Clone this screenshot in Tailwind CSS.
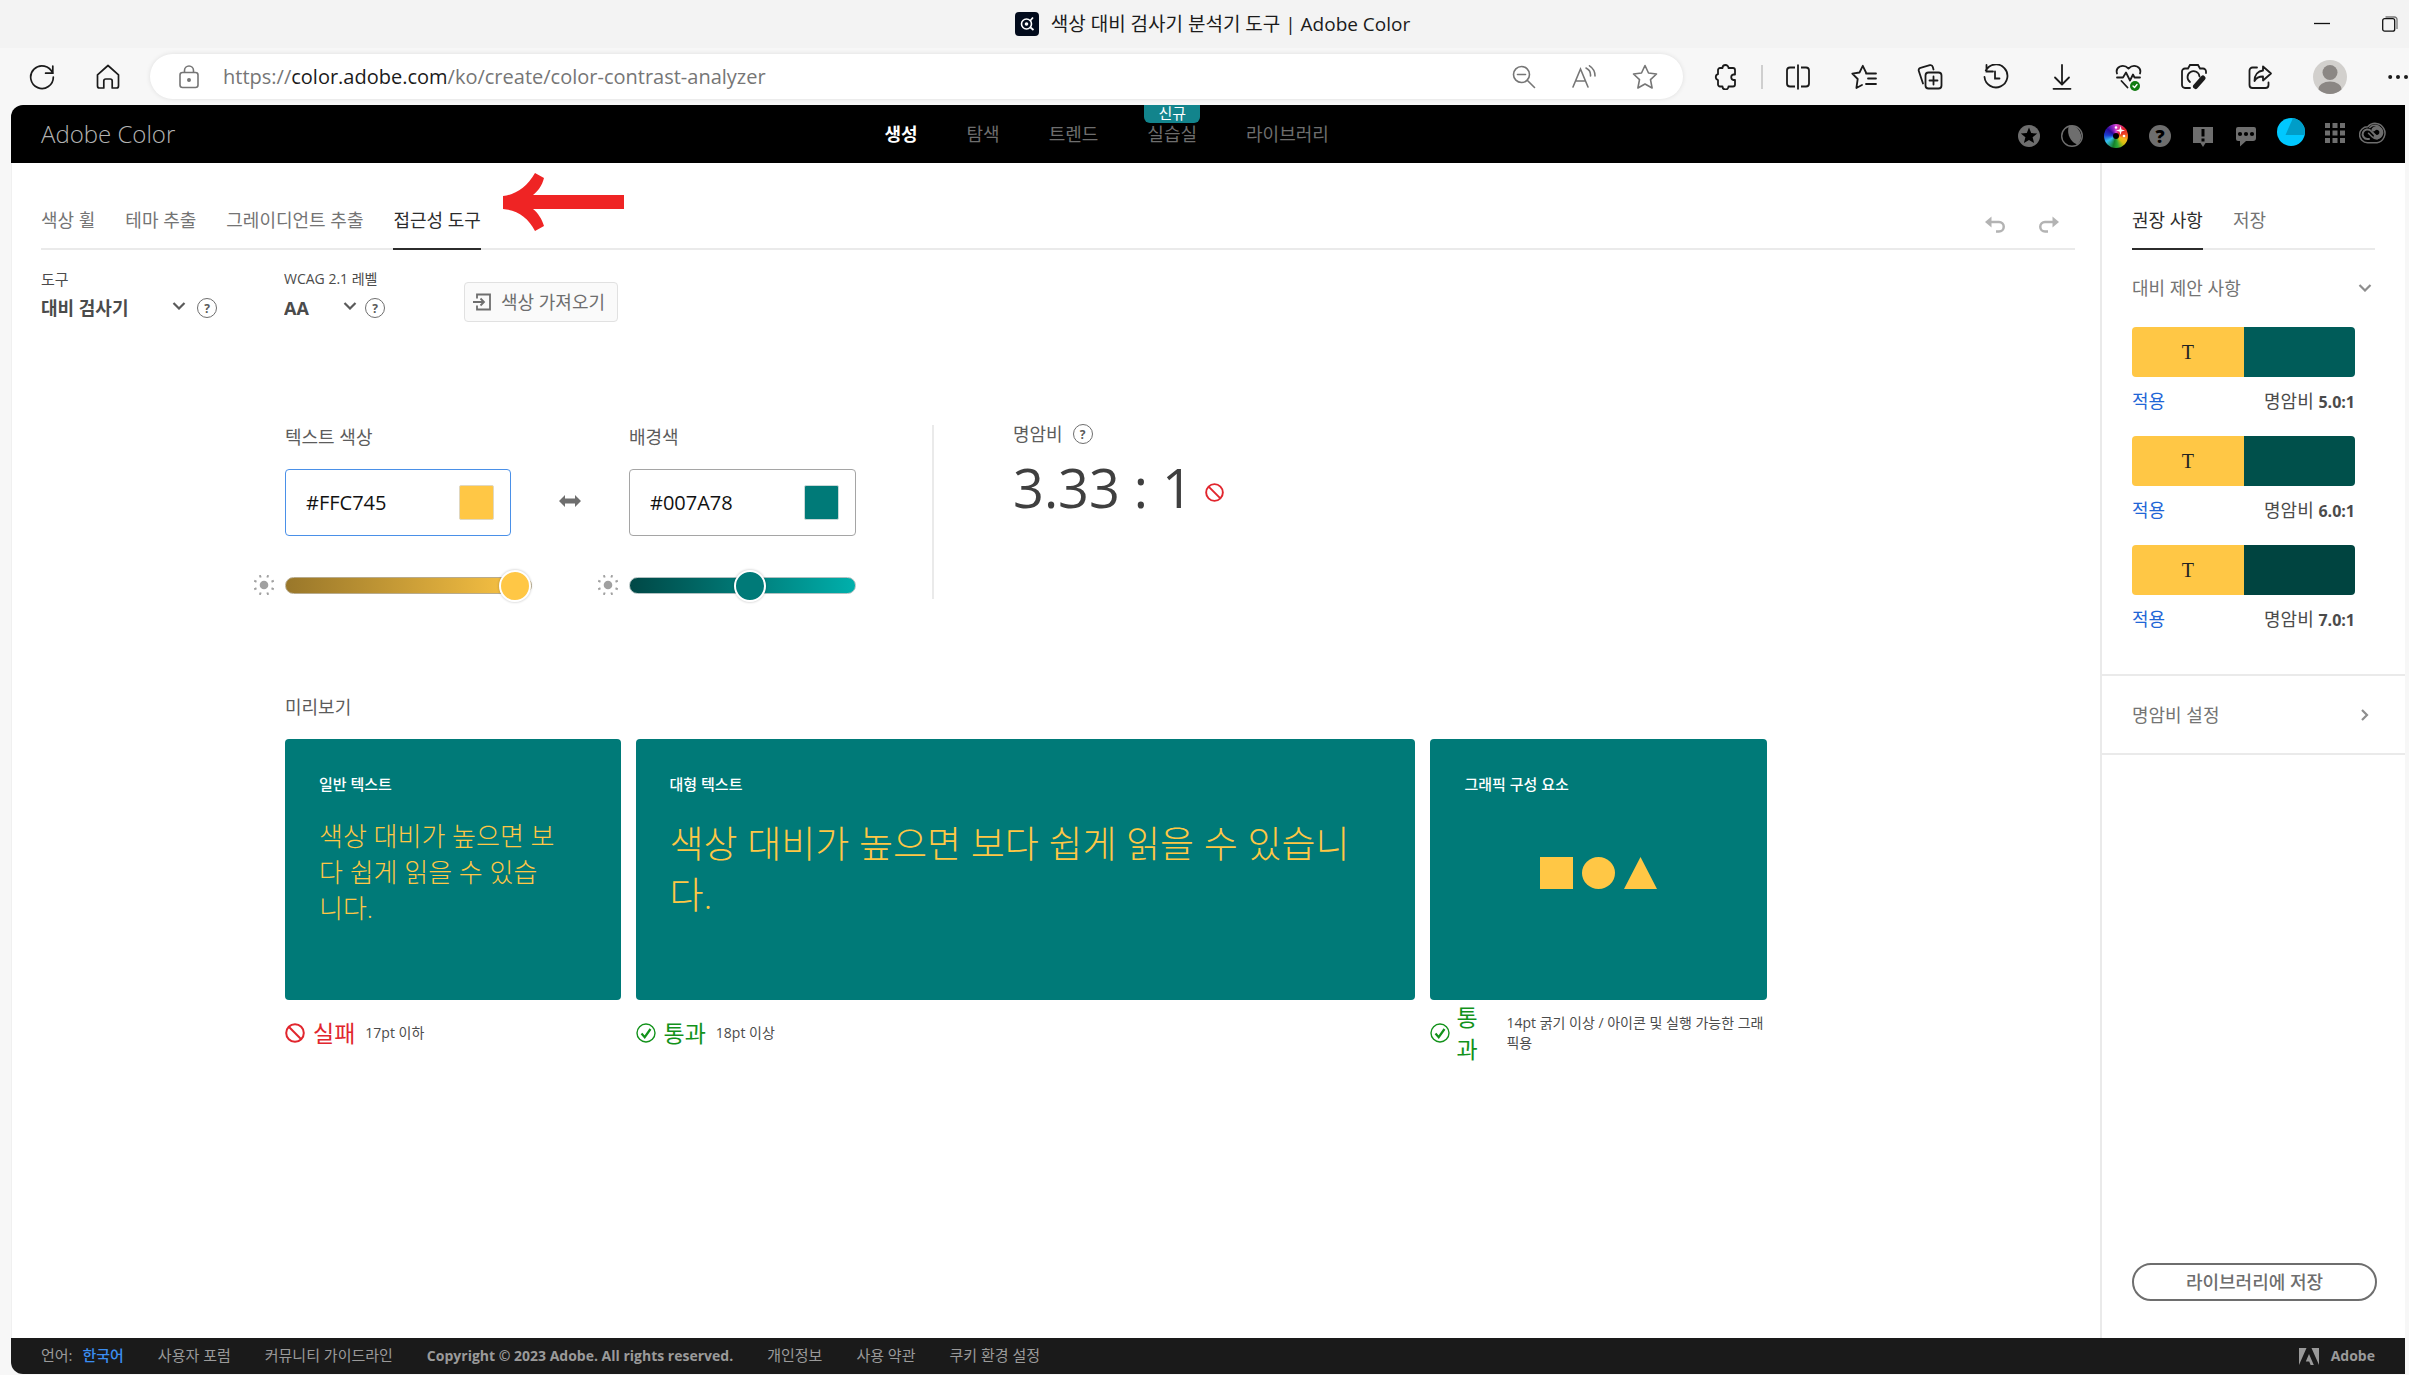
<!DOCTYPE html>
<html lang="ko">
<head>
<meta charset="utf-8">
<title>색상 대비 검사기 분석기 도구 | Adobe Color</title>
<script src="https://cdn.jsdelivr.net/npm/@tailwindcss/browser@4"></script>
</head>
<body class="flex min-h-screen flex-col bg-[#f7f7f7] pb-px font-['Open_Sans','Noto_Sans_CJK_KR',sans-serif] text-lg text-[#4b4b4b]">

<!-- Window title bar -->
<div class="grid h-12 grid-cols-[1fr_auto_1fr] items-center bg-[#f3f3f3] pl-4">
  <span></span>
  <div class="flex items-center gap-3">
    <svg class="size-6" viewBox="0 0 24 24" fill="none"><rect width="24" height="24" rx="4" fill="#020b1c"/><circle cx="11.500" cy="12" r="5" stroke="#fff" stroke-width="1.600"/><circle cx="11.500" cy="12" r="1.800" fill="#fff"/><path d="M15 9l3-3.500M15.500 15.500l3 2.500" stroke="#fff" stroke-width="1.800"/></svg>
    <span class="text-[19px] leading-6 text-[#1b1b1b]">색상 대비 검사기 분석기 도구 | Adobe Color</span>
  </div>
  <div class="flex items-center justify-end gap-[52px] pr-[11px]">
    <button aria-label="최소화"><svg class="size-4" viewBox="0 0 16 16"><path d="M0 7.500h16" stroke="#111" stroke-width="1.300"/></svg></button>
    <button aria-label="복원"><svg class="size-4" viewBox="0 0 16 16" fill="none" stroke="#111" stroke-width="1.300"><path d="M3.500 1h9A2.500 2.500 0 0 1 15 3.500V13" stroke="#777"/><rect x="0.700" y="2.700" width="12" height="12.500" rx="2"/></svg></button>
  </div>
</div>

<!-- Browser toolbar -->
<div class="flex h-[57px] items-center text-[#1b1b1b]">
  <div class="flex w-[150px] items-center gap-10 pl-[29px]">
    <button aria-label="새로 고침"><svg class="size-[26px]" viewBox="0 0 26 26" fill="none" stroke="currentColor" stroke-width="1.700" stroke-linecap="round"><path d="M23.500 9A11.300 11.300 0 1 0 24.300 13"/><path d="M23.800 2v7.200h-7.200"/></svg></button>
    <button aria-label="홈"><svg class="size-[26px]" viewBox="0 0 26 26" fill="none" stroke="currentColor" stroke-width="1.700" stroke-linejoin="round"><path d="M2.500 10.800L13 1.500l10.500 9.300V22a2 2 0 0 1-2 2h-4.300v-7a2 2 0 0 0-2-2h-4.400a2 2 0 0 0-2 2v7H4.500a2 2 0 0 1-2-2z"/></svg></button>
  </div>
  <div class="flex h-[45px] flex-1 items-center rounded-full bg-white pr-[25px] pl-[29px] text-[#767676] shadow-[0_0_5px_rgba(0,0,0,0.10)]">
    <svg class="h-6 w-5" viewBox="0 0 20 24" fill="none" stroke="currentColor" stroke-width="1.600"><rect x="1" y="7.500" width="18" height="15" rx="2.500"/><path d="M5.500 7.500V5.500a4.500 4.500 0 0 1 9 0v2"/><circle cx="10" cy="15" r="1.200" fill="currentColor"/></svg>
    <div class="flex-1 pl-6 text-xl leading-6">https://<span class="text-[#1b1b1b]">color.adobe.com</span>/ko/create/color-contrast-analyzer</div>
    <div class="flex items-center gap-9">
      <button aria-label="축소"><svg class="size-6" viewBox="0 0 24 24" fill="none" stroke="currentColor" stroke-width="1.600" stroke-linecap="round"><circle cx="9.500" cy="9.500" r="8"/><path d="M15.500 15.500l7 7M5.500 9.500h8"/></svg></button>
      <button aria-label="소리내어 읽기"><svg class="size-6" viewBox="0 0 24 24" fill="none" stroke="currentColor" stroke-width="1.600" stroke-linecap="round"><path d="M1 22L8.500 4 16 22M3.500 16h10M14 3a8 8 0 0 1 4.500 8M17.500 0.800A12 12 0 0 1 23 11"/></svg></button>
      <button aria-label="즐겨찾기에 추가"><svg class="size-[26px]" viewBox="0 0 26 26" fill="none" stroke="currentColor" stroke-width="1.600" stroke-linejoin="round"><path d="M13 1.500l3.500 7.500 8 1-6 5.700 1.600 8.300L13 20l-7.100 4 1.600-8.300-6-5.700 8-1z"/></svg></button>
    </div>
  </div>
  <div class="flex items-center pl-2.5">
    <button class="flex w-[66px] justify-center" aria-label="확장"><svg class="size-[26px]" viewBox="0 0 26 26" fill="none" stroke="currentColor" stroke-width="1.800" stroke-linejoin="round"><path d="M9.500 4a3 3 0 0 1 6 0H20a2 2 0 0 1 2 2v4.500h-1.500a2.800 2.800 0 0 0 0 5.500H22v4.500a2 2 0 0 1-2 2h-4.500a3 3 0 0 1-6 0H7a2 2 0 0 1-2-2V16a3 3 0 0 1 0-5.800V6a2 2 0 0 1 2-2z"/></svg></button>
    <span class="mx-0.5 h-6 w-0.5 bg-[#cfcfcf]"></span>
    <button class="flex w-[66px] justify-center" aria-label="화면 분할"><svg class="size-[26px]" viewBox="0 0 26 26" fill="none" stroke="currentColor" stroke-width="1.800"><path d="M13 0.500v25M10 3.500H5a3 3 0 0 0-3 3v13a3 3 0 0 0 3 3h5M16 3.500h5a3 3 0 0 1 3 3v13a3 3 0 0 1-3 3h-5"/></svg></button>
    <button class="flex w-[66px] justify-center" aria-label="즐겨찾기"><svg class="size-[26px]" viewBox="0 0 26 26" fill="none" stroke="currentColor" stroke-width="1.800" stroke-linejoin="round" stroke-linecap="round"><path d="M15 8.500L11.800 1.800 8.500 8.500l-7.200 1.100L6.700 15l-1.300 9 5.600-3M15 9.500h10M17 14.500h8M15 20h10"/></svg></button>
    <button class="flex w-[66px] justify-center" aria-label="컬렉션"><svg class="size-[26px]" viewBox="0 0 26 26" fill="none" stroke="currentColor" stroke-width="1.800" stroke-linecap="round"><path d="M6 19.500L1.800 7a2.500 2.500 0 0 1 1.700-3.200l9.300-2.600a2.500 2.500 0 0 1 3 1.800l.7 2.500"/><rect x="8.500" y="8.500" width="16" height="16" rx="3"/><path d="M16.500 12.500v8M12.500 16.500h8"/></svg></button>
    <button class="flex w-[66px] justify-center" aria-label="검색 기록"><svg class="size-[26px]" viewBox="0 0 26 26" fill="none" stroke="currentColor" stroke-width="1.800" stroke-linecap="round"><path d="M2.800 6.500A11.500 11.500 0 1 1 1.500 13M3.500 1v6.500H10M12 7.500v7h4.500"/></svg></button>
    <button class="flex w-[66px] justify-center" aria-label="다운로드"><svg class="size-[26px]" viewBox="0 0 26 26" fill="none" stroke="currentColor" stroke-width="1.800" stroke-linecap="round" stroke-linejoin="round"><path d="M13 1v19M6 13.500l7 7 7-7M4.500 24.800h17"/></svg></button>
    <button class="flex w-[66px] justify-center" aria-label="브라우저 필수 요소"><svg class="size-[28px]" viewBox="0 0 28 28" fill="none" stroke="currentColor" stroke-width="1.800" stroke-linecap="round" stroke-linejoin="round"><path d="M3 10.500C1 4 9 0 14.500 5.500 20 0 28 4 26 10.500M3 14.500h6l3-5 4 8 3-6 1.500 3H26M7.500 18l6 6.500"/><circle cx="21" cy="23" r="5" fill="#107c10" stroke="none"/><path d="M19 23l1.500 1.500 2.500-3" stroke="#fff" stroke-width="1.400"/></svg></button>
    <button class="flex w-[66px] justify-center" aria-label="웹 캡처"><svg class="size-[26px]" viewBox="0 0 26 26" fill="none" stroke="currentColor" stroke-width="1.800" stroke-linecap="round"><path d="M9 24H4a3 3 0 0 1-3-3V7.500a3 3 0 0 1 3-3h3L9 1h8l2 3.500h3a3 3 0 0 1 3 3V9M9 18a6 6 0 1 1 9.500-5.500"/><path d="M14.500 22.500l7.500-8.500" stroke-width="5"/></svg></button>
    <button class="flex w-[66px] justify-center" aria-label="공유"><svg class="size-[26px]" viewBox="0 0 26 26" fill="none" stroke="currentColor" stroke-width="1.800" stroke-linejoin="round" stroke-linecap="round"><path d="M10 3.500H5.500a3 3 0 0 0-3 3V21a3 3 0 0 0 3 3h13a3 3 0 0 0 3-3v-2.500"/><path d="M16 2.500l8 7-8 7v-4c-4 0-7 1.500-8.500 4.500C7.500 11 11 7 16 6.500z"/></svg></button>
    <button class="flex w-[74px] justify-center" aria-label="프로필"><svg class="size-[34px]" viewBox="0 0 34 34"><circle cx="17" cy="17" r="17" fill="#d2d0cd"/><circle cx="17" cy="12.500" r="7.500" fill="#8b8784"/><path d="M5.500 29.500a11.500 8 0 0 1 23 0A17 17 0 0 1 5.500 29.500z" fill="#8b8784"/></svg></button>
    <button class="flex w-[42px] justify-end" aria-label="설정 및 기타"><svg class="h-4 w-[21px]" viewBox="0 0 21 16" fill="currentColor"><circle cx="2.200" cy="8" r="2"/><circle cx="10" cy="8" r="2"/><circle cx="18" cy="8" r="2"/></svg></button>
  </div>
</div>

<div class="flex flex-1 flex-col pr-1 pl-[11px]">
  <!-- Site header -->
  <header class="flex h-[58px] items-center justify-between rounded-tl-xl bg-black pr-[18px] pl-[30px]">
    <a href="#" class="text-2xl font-light text-[#b3b3b3]">Adobe Color</a>
    <nav class="flex h-full gap-[49px] pl-5 leading-[58px] text-[#6e6e6e]">
      <a href="#" class="font-bold text-white">생성</a>
      <a href="#">탐색</a>
      <a href="#">트렌드</a>
      <a href="#" class="relative">실습실<span class="absolute top-0 left-1/2 h-[18px] w-14 -translate-x-1/2 rounded-b-md bg-[#12848c] text-center text-[15px] leading-4 text-white">신규</span></a>
      <a href="#">라이브러리</a>
    </nav>
    <div class="flex items-center gap-5 text-[#6e6e6e]">
      <div class="flex items-center gap-[21px] pt-1">
        <button aria-label="추천"><svg class="size-[22px]" viewBox="0 0 22 22"><circle cx="11" cy="11" r="11" fill="currentColor"/><path d="M11 2.500l2.200 5.600 6 .4-4.600 3.800 1.500 5.800L11 14.900l-5.100 3.200 1.500-5.800-4.600-3.800 6-.4z" fill="#000"/></svg></button>
        <button aria-label="테마 모드"><svg class="size-[22px]" viewBox="0 0 22 22"><circle cx="11" cy="11" r="10.300" fill="none" stroke="currentColor" stroke-width="1.400"/><path d="M8 .5a11 11 0 0 1 8.500 19C10 17.500 5 9 8 .5z" fill="currentColor"/></svg></button>
        <button aria-label="색상환" class="relative flex size-6 items-center justify-center rounded-full bg-[conic-gradient(#d54bd5,#e11f27_50deg,#f04a24_80deg,#f7b81d_110deg,#d8c010_135deg,#2ea836_170deg,#15802a_195deg,#35c0f0_240deg,#1b3bd0_275deg,#2a0a9a_310deg,#a02bc5_345deg,#d54bd5)]"><span class="size-1.5 rounded-full bg-black"></span><svg class="absolute inset-0 size-6" viewBox="0 0 24 24" fill="#fff"><path d="M16.500 2l1 3.500 3.500 1-3.500 1-1 3.500-1-3.500-3.500-1 3.500-1z"/><circle cx="20" cy="12" r="1.300"/><circle cx="12" cy="3.500" r="1.200"/></svg></button>
        <button class="size-[22px] rounded-full bg-[#6e6e6e] text-center text-lg leading-[22px] font-extrabold text-black" aria-label="도움말">?</button>
        <button aria-label="알림"><svg class="size-[22px]" viewBox="0 0 22 22"><path d="M1 2h20v16h-7.500L11 22l-2.500-4H1z" fill="currentColor"/><path d="M11 4v7.500M11 13.500v3" stroke="#000" stroke-width="3"/></svg></button>
        <button aria-label="피드백"><svg class="size-[22px]" viewBox="0 0 22 22"><path d="M3 2h16a2 2 0 0 1 2 2v9a3 3 0 0 1-3 3h-7l-6 5.500V16H3a2 2 0 0 1-2-2V4a2 2 0 0 1 2-2z" fill="currentColor"/><g fill="#000"><circle cx="5" cy="9" r="2.100"/><circle cx="11" cy="9" r="2.100"/><circle cx="17" cy="9" r="2.100"/></g></svg></button>
      </div>
      <button class="pb-1" aria-label="계정"><svg class="size-7" viewBox="0 0 28 28"><circle cx="14" cy="14" r="14" fill="#00c8ff"/><path d="M16 0a14 14 0 0 1 11.500 17L8.500 17z" fill="#009dc8"/></svg></button>
      <div class="flex items-center gap-3.5 pb-0.5">
        <button aria-label="앱"><svg class="size-5" viewBox="0 0 20 20" fill="currentColor"><path d="M0 0h5v5H0zM7.500 0h5v5h-5zM15 0h5v5h-5zM0 7.500h5v5H0zM7.500 7.500h5v5h-5zM15 7.500h5v5h-5zM0 15h5v5H0zM7.500 15h5v5h-5zM15 15h5v5h-5z"/></svg></button>
        <button aria-label="Creative Cloud"><svg class="h-[22px] w-7" viewBox="0 0 28 22" fill="none" stroke="currentColor" stroke-linecap="round"><path d="M8.800 4.700A9.800 9.800 0 1 1 18 20.800H8.500a8 8 0 0 1 .3-16.100z" stroke-width="1.500"/><path d="M10 17H8.500a4.800 4.800 0 1 1 3.400-8.100l5.600 5.600" stroke-width="2"/><path d="M10.800 5.500A7 7 0 1 1 18 17c-2.200 0-3.500-.6-5-2.200L9.500 11.300" stroke-width="1.500"/><path d="M14.500 7.500a4.500 4.500 0 1 1 2 7.200" stroke-width="4"/></svg></button>
      </div>
    </div>
  </header>

  <div class="flex flex-1 bg-white">
    <main class="relative flex-1 border-l border-[#f0f0f0] pr-[25px] pl-[29px]">
      <!-- Pointer to the active tab -->
      <svg class="absolute top-2.5 left-[491px] h-[58px] w-[121px]" viewBox="0 0 121 58"><path d="M0 23C12 22 24 14 32 0l9 5c-2 8-6 13-11 17h91v14H30c5 4 9 10 11 17l-9 5C25 44 14 37 0 36z" fill="#ef2424"/></svg>

      <div class="flex justify-between border-b-2 border-[#eaeaea]">
        <nav class="-mb-0.5 flex gap-[30px] leading-[26px] text-[#747474]">
          <a href="#" class="border-b-2 border-transparent pt-11 pb-[15px]">색상 휠</a>
          <a href="#" class="border-b-2 border-transparent pt-11 pb-[15px]">테마 추출</a>
          <a href="#" class="border-b-2 border-transparent pt-11 pb-[15px]">그레이디언트 추출</a>
          <a href="#" class="border-b-2 border-[#2c2c2c] pt-11 pb-[15px] text-[#2c2c2c]">접근성 도구</a>
        </nav>
        <div class="flex gap-[34px] pt-[38px] pr-4 text-[#b3b3b3]">
          <button aria-label="실행 취소"><svg class="size-5" viewBox="0 0 20 20" fill="none" stroke="currentColor" stroke-width="2.500"><path d="M4 7h10a4.700 4.700 0 0 1 0 9.500h-3"/><path d="M6.500 1.500v11L0 7z" fill="currentColor" stroke="none"/></svg></button>
          <button aria-label="다시 실행"><svg class="size-5" viewBox="0 0 20 20" fill="none" stroke="currentColor" stroke-width="2.500"><path d="M16 7H6a4.700 4.700 0 0 0 0 9.500h3"/><path d="M13.500 1.500v11L20 7z" fill="currentColor" stroke="none"/></svg></button>
        </div>
      </div>

      <div class="flex pt-5">
        <div class="w-[243px]">
          <label for="tool" class="block text-[15px] leading-[18px]">도구</label>
          <div class="mt-2 flex h-6 items-center gap-[11px]">
            <div class="relative w-[145px]">
              <select id="tool" class="w-full appearance-none bg-transparent text-lg leading-6 font-semibold"><option>대비 검사기</option></select>
              <svg class="pointer-events-none absolute top-2 right-0 h-2 w-3.5" viewBox="0 0 14 8" fill="none" stroke="#5a5a5a" stroke-width="2.200"><path d="M1.500 1L7 6.500 12.500 1"/></svg>
            </div>
            <button class="size-5 rounded-full border-[1.5px] border-[#6e6e6e] text-center text-xs leading-[17px] font-bold text-[#5a5a5a]" aria-label="도구 도움말">?</button>
          </div>
        </div>
        <div class="w-[180px]">
          <label for="level" class="block text-sm leading-[18px]">WCAG 2.1 레벨</label>
          <div class="mt-2 flex h-6 items-center gap-2">
            <div class="relative w-[73px]">
              <select id="level" class="w-full appearance-none bg-transparent text-lg leading-6 font-bold"><option>AA</option></select>
              <svg class="pointer-events-none absolute top-2 right-0 h-2 w-3.5" viewBox="0 0 14 8" fill="none" stroke="#5a5a5a" stroke-width="2.200"><path d="M1.500 1L7 6.500 12.500 1"/></svg>
            </div>
            <button class="size-5 rounded-full border-[1.5px] border-[#6e6e6e] text-center text-xs leading-[17px] font-bold text-[#5a5a5a]" aria-label="레벨 도움말">?</button>
          </div>
        </div>
        <button class="mt-3 flex h-10 items-center gap-2.5 rounded-[4px] border border-[#e1e1e1] bg-[#fafafa] pr-3 pl-2 text-[#6e6e6e]">
          <svg class="size-[18px]" viewBox="0 0 18 18" fill="none" stroke="currentColor" stroke-width="1.800"><path d="M4 5.500V1.500h13v15H4v-4M0 9h11M7.500 5.500L11 9l-3.500 3.500"/></svg>
          색상 가져오기
        </button>
      </div>

      <div class="pr-[308px] pl-[244px]">
        <!-- Colour pickers and ratio -->
        <section class="mt-[103px] flex">
          <div class="w-[226px]">
            <label for="fg" class="block leading-6 text-[#5c5c5c]">텍스트 색상</label>
            <div class="mt-5 flex h-[67px] items-center justify-between rounded-[4px] border border-[#4a90e8] pr-4 pl-5">
              <input id="fg" type="text" value="#FFC745" class="w-28 bg-transparent text-xl text-[#111] outline-none">
              <button class="size-[35px] rounded-xs border border-[#e1d8c0] bg-[#ffc745]" aria-label="텍스트 색상 선택"></button>
            </div>
            <div class="mt-[34px] -ml-[31px] flex w-[278px] items-center gap-[11px]">
              <svg class="size-5" viewBox="0 0 20 20" stroke="#a0a0a0" stroke-width="2"><circle cx="10" cy="10" r="4.300" fill="#a0a0a0" stroke="none"/><path d="M6.700 2.500L5.800.2M13.300 2.500l.9-2.300M6.700 17.500l-.9 2.300M13.300 17.500l.9 2.300M2.500 6.700L.2 5.800M2.500 13.300l-2.300.9M17.500 6.700l2.300-.9M17.500 13.300l2.300.9"/></svg>
              <input type="range" min="0" max="100" value="100" aria-label="텍스트 색상 명도" class="h-[30px] flex-1 appearance-none bg-transparent [&::-webkit-slider-runnable-track]:h-[17px] [&::-webkit-slider-runnable-track]:rounded-full [&::-webkit-slider-runnable-track]:border [&::-webkit-slider-runnable-track]:border-[#b8ab8c] [&::-webkit-slider-runnable-track]:bg-linear-to-r [&::-webkit-slider-runnable-track]:from-[#99772a] [&::-webkit-slider-runnable-track]:to-[#ffc745] [&::-webkit-slider-thumb]:-mt-2 [&::-webkit-slider-thumb]:size-8 [&::-webkit-slider-thumb]:appearance-none [&::-webkit-slider-thumb]:rounded-full [&::-webkit-slider-thumb]:border-2 [&::-webkit-slider-thumb]:border-white [&::-webkit-slider-thumb]:bg-[#ffc745] [&::-webkit-slider-thumb]:shadow-[0_0_2px_1px_rgba(0,0,0,0.12)]">
            </div>
          </div>
          <div class="mt-[42px] flex h-[67px] w-[118px] items-center justify-center">
            <button aria-label="색상 바꾸기"><svg class="h-3 w-[22px]" viewBox="0 0 22 12" fill="#6e6e6e"><path d="M0 6l6-6v3.500h10V0l6 6-6 6V8.500H6V12z"/></svg></button>
          </div>
          <div class="w-[227px]">
            <label for="bg" class="block leading-6 text-[#5c5c5c]">배경색</label>
            <div class="mt-5 flex h-[67px] items-center justify-between rounded-[4px] border border-[#a5a5a5] pr-4 pl-5">
              <input id="bg" type="text" value="#007A78" class="w-28 bg-transparent text-xl text-[#111] outline-none">
              <button class="size-[35px] rounded-xs border border-[#c9d8d8] bg-[#007a78]" aria-label="배경색 선택"></button>
            </div>
            <div class="mt-[34px] -ml-[31px] flex w-[258px] items-center gap-[11px]">
              <svg class="size-5" viewBox="0 0 20 20" stroke="#a0a0a0" stroke-width="2"><circle cx="10" cy="10" r="4.300" fill="#a0a0a0" stroke="none"/><path d="M6.700 2.500L5.800.2M13.300 2.500l.9-2.300M6.700 17.500l-.9 2.300M13.300 17.500l.9 2.300M2.500 6.700L.2 5.800M2.500 13.300l-2.300.9M17.500 6.700l2.300-.9M17.500 13.300l2.300.9"/></svg>
              <input type="range" min="0" max="100" value="54" aria-label="배경색 명도" class="h-[30px] flex-1 appearance-none bg-transparent [&::-webkit-slider-runnable-track]:h-[17px] [&::-webkit-slider-runnable-track]:rounded-full [&::-webkit-slider-runnable-track]:border [&::-webkit-slider-runnable-track]:border-[#b0c0c0] [&::-webkit-slider-runnable-track]:bg-linear-to-r [&::-webkit-slider-runnable-track]:from-[#004846] [&::-webkit-slider-runnable-track]:to-[#00b0ac] [&::-webkit-slider-thumb]:-mt-2 [&::-webkit-slider-thumb]:size-8 [&::-webkit-slider-thumb]:appearance-none [&::-webkit-slider-thumb]:rounded-full [&::-webkit-slider-thumb]:border-2 [&::-webkit-slider-thumb]:border-white [&::-webkit-slider-thumb]:bg-[#007a78] [&::-webkit-slider-thumb]:shadow-[0_0_2px_1px_rgba(0,0,0,0.12)]">
            </div>
          </div>
          <div class="ml-[76px] h-[174px] border-l-2 border-[#eaeaea] pl-[79px]">
            <div class="flex h-[18px] items-center gap-2.5 leading-[18px] text-[#5c5c5c]">명암비
              <button class="size-5 rounded-full border-[1.5px] border-[#6e6e6e] text-center text-xs leading-[17px] font-bold text-[#5a5a5a]" aria-label="명암비 도움말">?</button>
            </div>
            <div class="mt-3.5 flex items-center gap-3 text-[54px] leading-[60px] text-[#3f3f3f]">3.33 : 1
              <svg class="mt-2.5 size-[19px]" viewBox="0 0 20 20" fill="none" stroke="#e1262e" stroke-width="2"><circle cx="10" cy="10" r="8.800"/><path d="M3.800 3.800l12.400 12.400"/></svg>
            </div>
          </div>
        </section>

        <!-- Previews -->
        <section class="mt-[95px]">
          <h2 class="leading-6 text-[#5c5c5c]">미리보기</h2>
          <div class="mt-5 grid grid-cols-[336fr_781fr_337fr] gap-x-[15px] text-[#ffc745]">
            <div class="min-h-[261px] rounded-[4px] bg-[#007a78] px-[34px] pt-[35px]">
              <h3 class="text-[15px] leading-5 font-medium text-white">일반 텍스트</h3>
              <p class="mt-6 text-[26px] leading-9 font-light whitespace-nowrap">색상 대비가 높으면 보<br>다 쉽게 읽을 수 있습<br>니다.</p>
            </div>
            <div class="min-h-[261px] rounded-[4px] bg-[#007a78] px-[34px] pt-[35px]">
              <h3 class="text-[15px] leading-5 font-medium text-white">대형 텍스트</h3>
              <p class="mt-6 text-[37px] leading-[51px] font-light whitespace-nowrap">색상 대비가 높으면 보다 쉽게 읽을 수 있습니<br>다.</p>
            </div>
            <div class="min-h-[261px] rounded-[4px] bg-[#007a78] px-[34px] pt-[35px]">
              <h3 class="text-[15px] leading-5 font-medium text-white">그래픽 구성 요소</h3>
              <svg class="mx-auto mt-[63px] h-8 w-[117px]" viewBox="0 0 117 32" fill="#ffc745"><path d="M0 0h33v32H0zM84 32L100.500 0 117 32z"/><ellipse cx="58.500" cy="16" rx="16.500" ry="16"/></svg>
            </div>
            <div class="flex min-h-[66px] items-center text-[#4b4b4b]">
              <svg class="size-5" viewBox="0 0 20 20" fill="none" stroke="#e1262e" stroke-width="2"><circle cx="10" cy="10" r="8.800"/><path d="M3.800 3.800l12.400 12.400"/></svg>
              <span class="ml-2 text-[23px] leading-8 text-[#e1262e]">실패</span>
              <span class="ml-2.5 text-sm leading-5">17pt 이하</span>
            </div>
            <div class="flex min-h-[66px] items-center text-[#4b4b4b]">
              <svg class="size-5" viewBox="0 0 20 20" fill="none" stroke="#12921a"><circle cx="10" cy="10" r="9" stroke-width="1.400"/><path d="M5.500 10.500l3.200 3.700L14.500 6" stroke-width="2.200"/></svg>
              <span class="ml-2 text-[23px] leading-8 text-[#12921a]">통과</span>
              <span class="ml-2.5 text-sm leading-5">18pt 이상</span>
            </div>
            <div class="flex min-h-[66px] items-center text-[#4b4b4b]">
              <svg class="size-5 shrink-0" viewBox="0 0 20 20" fill="none" stroke="#12921a"><circle cx="10" cy="10" r="9" stroke-width="1.400"/><path d="M5.500 10.500l3.200 3.700L14.500 6" stroke-width="2.200"/></svg>
              <span class="ml-1.5 w-[22px] text-[23px] leading-8 break-all text-[#12921a]">통과</span>
              <span class="ml-7 flex-1 text-sm leading-5 break-all">14pt 굵기 이상 / 아이콘 및 실행 가능한 그래픽용</span>
            </div>
          </div>
        </section>
      </div>
    </main>

    <!-- Suggestions panel -->
    <aside class="flex w-[305px] flex-col border-l-2 border-[#eaeaea]">
      <nav class="mx-[30px] flex gap-[30px] border-b-2 border-[#eaeaea] leading-[26px] text-[#747474]">
        <a href="#" class="-mb-0.5 border-b-2 border-[#2c2c2c] pt-11 pb-[15px] text-[#2c2c2c]">권장 사항</a>
        <a href="#" class="pt-11 pb-[15px]">저장</a>
      </nav>
      <section class="border-b-2 border-[#eaeaea] px-[30px] pb-[42px]">
        <button class="mt-[26px] flex w-full items-center justify-between pr-[3px] leading-6 text-[#747474]">대비 제안 사항
          <svg class="h-2 w-3.5" viewBox="0 0 14 8" fill="none" stroke="#8e8e8e" stroke-width="2.200"><path d="M1.500 1L7 6.500 12.500 1"/></svg>
        </button>
        <ul class="mt-[27px] flex w-[223px] flex-col gap-[22px]">
          <li>
            <div class="grid h-[50px] grid-cols-2 overflow-hidden rounded-[4px] text-center font-['Liberation_Serif',serif] text-xl leading-[50px] text-[#222]"><span class="bg-[#ffc745]">T</span><span class="bg-[#005c59]"></span></div>
            <div class="mt-3 flex justify-between leading-[25px]"><a href="#" class="text-[#1f66d6]">적용</a><span>명암비 <b class="text-base">5.0:1</b></span></div>
          </li>
          <li>
            <div class="grid h-[50px] grid-cols-2 overflow-hidden rounded-[4px] text-center font-['Liberation_Serif',serif] text-xl leading-[50px] text-[#222]"><span class="bg-[#ffc745]">T</span><span class="bg-[#00504b]"></span></div>
            <div class="mt-3 flex justify-between leading-[25px]"><a href="#" class="text-[#1f66d6]">적용</a><span>명암비 <b class="text-base">6.0:1</b></span></div>
          </li>
          <li>
            <div class="grid h-[50px] grid-cols-2 overflow-hidden rounded-[4px] text-center font-['Liberation_Serif',serif] text-xl leading-[50px] text-[#222]"><span class="bg-[#ffc745]">T</span><span class="bg-[#004440]"></span></div>
            <div class="mt-3 flex justify-between leading-[25px]"><a href="#" class="text-[#1f66d6]">적용</a><span>명암비 <b class="text-base">7.0:1</b></span></div>
          </li>
        </ul>
      </section>
      <section class="border-b-2 border-[#eaeaea] px-[30px]">
        <button class="flex h-[77px] w-full items-center justify-between pr-1.5 text-[#747474]">명암비 설정
          <svg class="h-3 w-2" viewBox="0 0 8 12" fill="none" stroke="#8e8e8e" stroke-width="2.200"><path d="M1 1l5 5-5 5"/></svg>
        </button>
      </section>
      <button class="mr-[28px] ml-[30px] mt-auto mb-[37px] h-[38px] rounded-full border-2 border-[#6e6e6e] font-medium text-[#6e6e6e]">라이브러리에 저장</button>
    </aside>
  </div>

  <footer class="flex h-9 items-center justify-between rounded-bl-xl bg-[#1a1a1a] pr-[30px] pl-[30px] text-[15px] text-[#9a9a9a]">
    <div class="flex gap-[34px]">
      <span>언어: <a href="#" class="ml-1.5 font-medium text-[#3b8df0]">한국어</a></span>
      <a href="#">사용자 포럼</a>
      <a href="#">커뮤니티 가이드라인</a>
      <span class="text-sm leading-6 font-bold">Copyright © 2023 Adobe. All rights reserved.</span>
      <a href="#">개인정보</a>
      <a href="#">사용 약관</a>
      <a href="#">쿠키 환경 설정</a>
    </div>
    <div class="flex items-center gap-3 text-sm font-bold">
      <svg class="h-[17px] w-5" viewBox="0 0 20 17" fill="currentColor"><path d="M0 0h7.500L0 17zM12.500 0H20v17zM10 6l4.800 11h-3.200l-1.400-3.500H6.800z"/></svg>
      Adobe
    </div>
  </footer>
</div>
</body>
</html>
